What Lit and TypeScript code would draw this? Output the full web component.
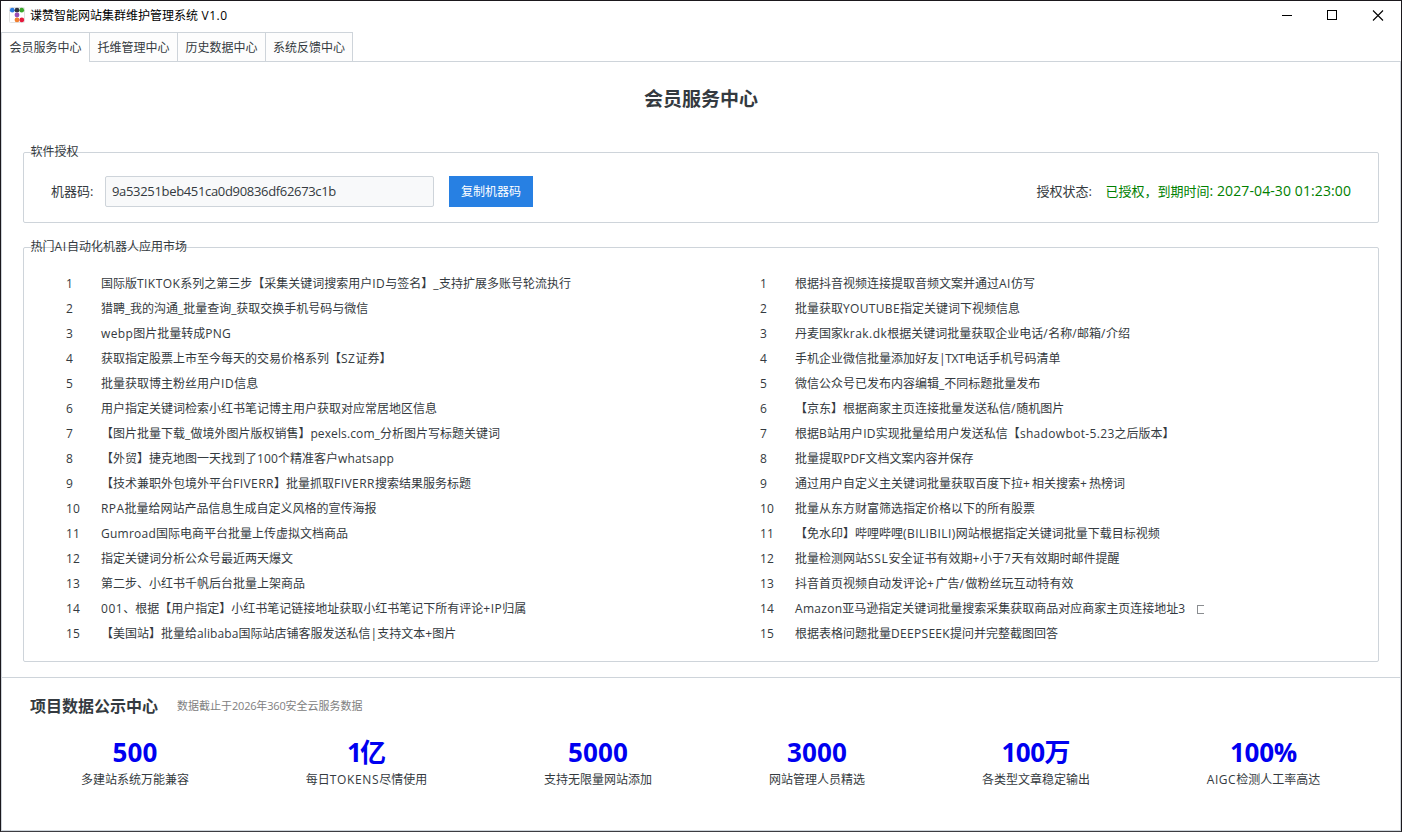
import { LitElement, html, css, svg } from "lit";
import { customElement, property } from "lit/decorators.js";

/** A single line whose Latin runs are tracked so the line takes `width` pixels. */
@customElement("fit-text")
class FitText extends LitElement {
  static styles = css`
    :host { display: inline-block; white-space: pre; text-spacing-trim: space-all; text-autospace: no-autospace; }
    .latin { font-size: var(--latin-size, inherit); }
  `;
  @property() text = "";
  @property({ type: Number }) width = 0;

  render() {
    const parts = this.text.split(/([\x20-\x7e]+)/).filter(Boolean);
    return html`<span class="line">${parts.map((p) =>
      /^[\x20-\x7e]/.test(p) ? html`<span class="latin">${p}</span>` : html`<span class="cjk">${p}</span>`)}</span>`;
  }

  updated() {
    if (!this.width) return;
    const root = this.renderRoot as ShadowRoot;
    const line = root.querySelector(".line") as HTMLElement;
    const latin = [...root.querySelectorAll<HTMLElement>(".latin")];
    const runs = latin.length ? latin : [line];
    const count = runs.reduce((n, r) => n + (r.textContent || "").length, 0);
    const gap = (this.width - line.getBoundingClientRect().width) / count;
    runs.forEach((r) => (r.style.letterSpacing = `${gap.toFixed(3)}px`));
  }
}

type Row = [string, number];

const LEFT: Row[] = [
  ["国际版TIKTOK系列之第三步【采集关键词搜索用户ID与签名】_支持扩展多账号轮流执行", 470],
  ["猎聘_我的沟通_批量查询_获取交换手机号码与微信", 267.3],
  ["webp图片批量转成PNG", 130.2],
  ["获取指定股票上市至今每天的交易价格系列【SZ证券】", 290.5],
  ["批量获取博主粉丝用户ID信息", 157.3],
  ["用户指定关键词检索小红书笔记博主用户获取对应常居地区信息", 336],
  ["【图片批量下载_做境外图片版权销售】pexels.com_分析图片写标题关键词", 399],
  ["【外贸】捷克地图一天找到了100个精准客户whatsapp", 293],
  ["【技术兼职外包境外平台FIVERR】批量抓取FIVERR搜索结果服务标题", 370],
  ["RPA批量给网站产品信息生成自定义风格的宣传海报", 275.4],
  ["Gumroad国际电商平台批量上传虚拟文档商品", 247],
  ["指定关键词分析公众号最近两天爆文", 192],
  ["第二步、小红书千帆后台批量上架商品", 204],
  ["001、根据【用户指定】小红书笔记链接地址获取小红书笔记下所有评论+IP归属", 425.3],
  ["【美国站】批量给alibaba国际站店铺客服发送私信|支持文本+图片", 355.3],
];

const RIGHT: Row[] = [
  ["根据抖音视频连接提取音频文案并通过AI仿写", 240],
  ["批量获取YOUTUBE指定关键词下视频信息", 225],
  ["丹麦国家krak.dk根据关键词批量获取企业电话/名称/邮箱/介绍", 335],
  ["手机企业微信批量添加好友|TXT电话手机号码清单", 265.5],
  ["微信公众号已发布内容编辑_不同标题批量发布", 245.2],
  ["【京东】根据商家主页连接批量发送私信/随机图片", 269.3],
  ["根据B站用户ID实现批量给用户发送私信【shadowbot-5.23之后版本】", 379.6],
  ["批量提取PDF文档文案内容并保存", 178.4],
  ["通过用户自定义主关键词批量获取百度下拉+相关搜索+热榜词", 330],
  ["批量从东方财富筛选指定价格以下的所有股票", 240],
  ["【免水印】哔哩哔哩(BILIBILI)网站根据指定关键词批量下载目标视频", 364.7],
  ["批量检测网站SSL安全证书有效期+小于7天有效期时邮件提醒", 324.5],
  ["抖音首页视频自动发评论+广告/做粉丝玩互动特有效", 278.4],
  ["Amazon亚马逊指定关键词批量搜索采集获取商品对应商家主页连接地址3", 390.5],
  ["根据表格问题批量DEEPSEEK提问并完整截图回答", 263],
];

const STATS: [string, number, string, number][] = [
  ["500", 45, "多建站系统万能兼容", 108],
  ["1亿", 39, "每日TOKENS尽情使用", 121.5],
  ["5000", 60, "支持无限量网站添加", 108],
  ["3000", 60, "网站管理人员精选", 96],
  ["100万", 69, "各类型文章稳定输出", 108],
  ["100%", 67, "AIGC检测人工率高达", 113.5],
];

@customElement("app-root")
class AppRoot extends LitElement {
  static styles = css`
    * { box-sizing: border-box; }
    :host {
      display: block; width: 1402px; height: 832px; overflow: hidden; background: #fff; color: #343a40;
      font: 12px/16px "Open Sans", "Noto Sans CJK SC", sans-serif;
    }
    .window { height: 832px; border: 1px solid #1b181d; border-bottom-color: #3c3c42; display: flex; flex-direction: column; }
    .titlebar { height: 31px; flex: none; display: flex; align-items: center; color: #000; padding-left: 8px; }
    .logo { width: 16px; height: 16px; margin: 0 5px 3px 0; display: block; }
    .title { flex: 1; padding-bottom: 2px; }
    .buttons { display: flex; padding-bottom: 1px; }
    .buttons svg { display: block; width: 46px; height: 30px; margin-right: -0.3px; }
    .tabs { display: flex; height: 30px; flex: none; }
    .tab { width: 88px; border: 1px solid #ced4da; border-left: 0; padding-top: 7px; display: flex; justify-content: center; background: #fdfdfd; }
    .tab.on { width: 89px; border-left: 1px solid #ced4da; border-bottom: 0; background: #fff; padding-right: 0; }
    .tab:nth-child(4) { width: 87px; }
    .rest { flex: 1; border-bottom: 1px solid #ced4da; }
    .page { flex: 1; border: 1px solid #ced4da; border-top: 0; display: flex; flex-direction: column; min-height: 0; }
    h1 { margin: 23px 0 0; text-align: center; font-size: 19px; line-height: 28px; font-weight: 700; height: 67px; }
    .group { position: relative; margin: 0 21px; border: 1px solid #ced4da; border-radius: 2px; }
    .legend { position: absolute; top: -9px; left: 6.5px; font-size: 12px; line-height: 16px; }
    .legend::before { content: ""; position: absolute; z-index: -1; left: 0; right: 0; top: 8px; height: 1px; background: #fff; }
    .license { height: 71px; display: flex; align-items: center; padding: 7px 27px 0 27px; font-size: 13px; }
    .code { width: 329px; height: 31px; margin-left: 11px; padding: 6px 6px; border: 1px solid #ced4da; border-radius: 2px; background: #f8f9fa; }
    .copy { width: 84px; height: 31px; margin-left: 15px; border: 0; padding: 2px 0 0; background: #2780e3; color: #fff; font: inherit; font-size: 12px; }
    .state { margin-left: auto; margin-right: 13px; }
    .ok { color: #008000; --latin-size: 14px; }
    .market { margin-top: 24px; height: 415px; display: grid; grid-template-columns: 694px 1fr; padding: 24px 0 0 42px; }
    .row { display: flex; height: 25px; align-items: center; padding-bottom: 1px; }
    .num { width: 35px; }
    .missing { width: 7px; height: 9px; border: 1px solid #8a8d90; border-right: 0; margin-left: 11.5px; }
    .stats { margin-top: 15px; border-top: 1px solid #ced4da; flex: 1; }
    .head { display: flex; align-items: center; height: 26px; margin-top: 15px; padding-left: 28px; }
    h2 { margin: 0 19px 0 0; font-size: 16px; line-height: 24px; font-weight: 700; }
    .note { font-size: 11px; color: #808080; }
    .nums { display: grid; grid-template-columns: 264px 199px 264px 174px 264px 191px; padding-left: 1px; margin-top: 15px; }
    .stat { display: flex; flex-direction: column; align-items: center; }
    .big { color: #0000f0; font-size: 26px; line-height: 36px; font-weight: 700; height: 36px; }
    .cap { line-height: 16px; margin-top: 2px; }
  `;

  private list(rows: Row[], flagged = -1) {
    return html`<div class="list">${rows.map(([t, w], i) => html`
      <div class="row"><span class="num"><fit-text text=${i + 1} width=${i > 8 ? 14 : 7}></fit-text></span>
        <fit-text text=${t} width=${w}></fit-text>${i === flagged ? html`<span class="missing"></span>` : ""}</div>`)}</div>`;
  }

  render() {
    const dots: [number, number, string][] = [
      [3.3, 3.2, "#2c7be0"], [8, 3.2, "#34343f"], [12.7, 3.2, "#3aa52a"],
      [8, 8, "#9a4fb8"], [8, 12.9, "#f08030"], [12.8, 12.9, "#e5193c"],
    ];
    return html`<div class="window">
      <div class="titlebar">
        <svg class="logo" viewBox="0 0 16 16"><rect x=".5" y=".5" width="15" height="15" rx="1" fill="#fff" stroke="#e2e2e2"/>
          ${dots.map(([x, y, c]) => svg`<circle cx=${x} cy=${y} r="2.4" fill=${c}/>`)}</svg>
        <span class="title"><fit-text text="谍赞智能网站集群维护管理系统 V1.0" width="197.5"></fit-text></span>
        <div class="buttons">
          <svg viewBox="0 0 46 30"><path d="M18 14.5h10" stroke="#000"/></svg>
          <svg viewBox="0 0 46 30"><rect x="17.5" y="9.5" width="9" height="9" fill="none" stroke="#000"/></svg>
          <svg viewBox="0 0 46 30"><path d="M18 9.5l10 10m0-10l-10 10" stroke="#000" stroke-width="1.1"/></svg>
        </div>
      </div>
      <div class="tabs">
        ${["会员服务中心", "托维管理中心", "历史数据中心", "系统反馈中心"].map((t, i) =>
          html`<div class="tab ${i ? "" : "on"}">${t}</div>`)}
        <div class="rest"></div>
      </div>
      <div class="page">
        <h1>会员服务中心</h1>
        <section class="group license">
          <span class="legend">软件授权</span>
          <fit-text text="机器码:" width="43"></fit-text>
          <div class="code"><fit-text text="9a53251beb451ca0d90836df62673c1b" width="224"></fit-text></div>
          <button class="copy">复制机器码</button>
          <fit-text class="state" text="授权状态:" width="56"></fit-text>
          <fit-text class="ok" text="已授权，到期时间: 2027-04-30 01:23:00" width="245.5"></fit-text>
        </section>
        <section class="group market">
          <span class="legend"><fit-text text="热门AI自动化机器人应用市场" width="156.5"></fit-text></span>
          ${this.list(LEFT)}${this.list(RIGHT, 13)}
        </section>
        <section class="stats">
          <div class="head"><h2>项目数据公示中心</h2>
            <fit-text class="note" text="数据截止于2026年360安全云服务数据" width="185.5"></fit-text></div>
          <div class="nums">${STATS.map(([n, nw, c, cw]) => html`<div class="stat">
            <fit-text class="big" text=${n} width=${nw}></fit-text>
            <fit-text class="cap" text=${c} width=${cw}></fit-text></div>`)}</div>
        </section>
      </div>
    </div>`;
  }
}
